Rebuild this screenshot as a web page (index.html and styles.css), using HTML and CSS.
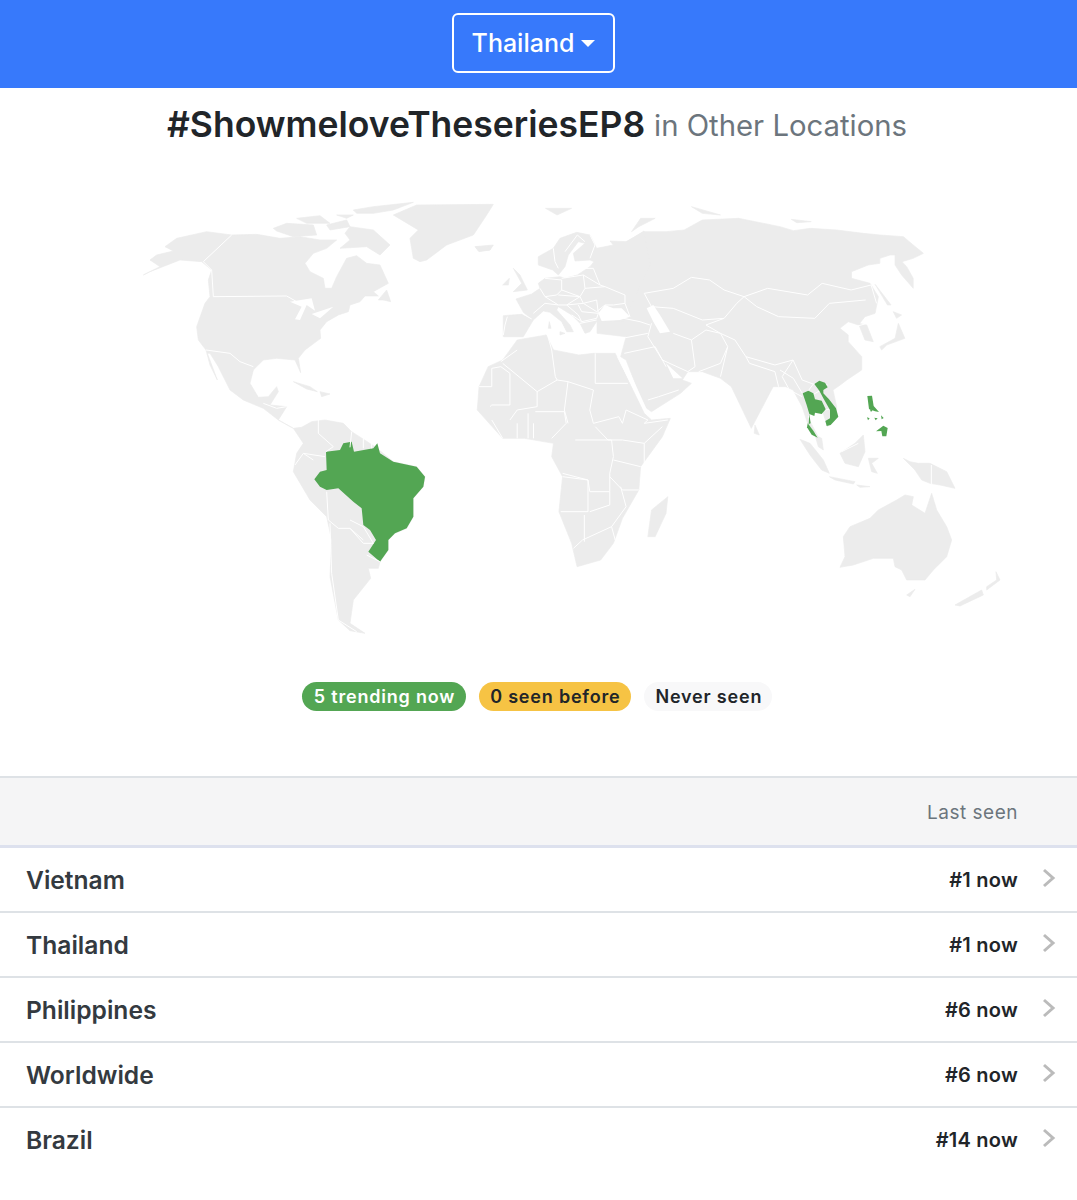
FILE: index.html
```html
<!DOCTYPE html>
<html lang="en">
<head>
<meta charset="utf-8">
<title>#ShowmeloveTheseriesEP8 in Other Locations</title>
<link rel="stylesheet" href="styles.css">
</head>
<body>
<header class="topbar">
  <button class="country-btn" type="button">Thailand<span class="caret"></span></button>
</header>
<main>
  <h1 class="title">#ShowmeloveTheseriesEP8 <small class="title-sub">in Other Locations</small></h1>
  <svg class="map" viewBox="0 160 1077 490" aria-label="World map">
    <g transform="translate(130 190) scale(.33333)">
      <g class="land">
        <path d="M40,255 L90,230 L60,210 L80,195 L130,183 L105,170 L140,145 L230,125 L305,135 L380,133 L450,145 L510,140 L570,150 L620,150 L590,175 L550,190 L525,220 L540,245 L580,265 L585,295 L605,295 L620,260 L650,205 L680,197 L710,220 L750,225 L775,280 L730,305 L745,318 L705,318 L690,335 L660,345 L655,365 L625,375 L590,395 L570,420 L572,445 L525,480 L505,505 L512,548 L495,510 L440,505 L400,510 L370,540 L360,580 L385,622 L415,620 L440,590 L445,605 L420,645 L470,650 L445,690 L490,715 L515,712 L545,695 L585,690 L640,700 L665,725 L735,770 L790,815 L860,830 L885,860 L880,890 L850,925 L850,980 L830,1015 L795,1030 L775,1050 L775,1080 L750,1115 L745,1135 L715,1135 L722,1165 L670,1230 L660,1300 L705,1330 L660,1322 L625,1290 L600,1160 L605,1050 L590,980 L540,930 L490,845 L500,790 L520,760 L490,715 L445,690 L400,655 L340,630 L300,600 L265,530 L240,490 L232,490 L262,570 L240,525 L228,480 L205,450 L200,410 L225,340 L240,320 L235,270 L245,240 L215,215 L150,210 L60,245 Z"/>
        <path d="M850,205 L840,145 L865,120 L790,75 L860,45 L1090,43 L1070,75 L1030,135 L950,165 L890,210 L870,215 Z"/>
        <path d="M630,175 L660,150 L645,130 L660,110 L730,120 L780,165 L750,195 L710,170 Z"/>
        <path d="M670,60 L730,50 L850,37 L790,60 L730,70 L680,70 Z"/>
        <path d="M430,115 L470,100 L550,105 L560,135 L490,140 L440,123 Z"/>
        <path d="M500,85 L570,77 L600,100 L530,100 Z"/>
        <path d="M590,105 L650,90 L660,110 L600,120 Z"/>
        <path d="M620,75 L670,75 L650,85 Z"/>
        <path d="M1035,170 L1090,165 L1080,180 L1045,183 Z"/>
        <path d="M745,330 L770,300 L782,335 L760,330 Z"/>
        <path d="M490,575 L540,590 L562,605 L530,597 Z"/>
        <path d="M570,605 L600,612 L575,620 Z"/>
      </g>
      <g class="water">
        <path d="M480,335 L545,325 L555,362 L530,345 L510,390 L495,388 L515,350 Z"/>
        <path d="M545,372 L610,350 L570,385 Z"/>
      </g>
      <path class="green" d="M553,868 L570,845 L590,840 L588,785 L630,780 L640,760 L665,755 L672,785 L730,775 L742,760 L750,790 L790,815 L860,830 L885,860 L880,890 L850,925 L850,980 L830,1015 L795,1030 L775,1050 L775,1080 L750,1115 L715,1085 L738,1050 L720,1020 L700,1005 L695,955 L670,935 L625,895 L590,900 L570,890 Z"/>
      <g class="borders">
        <path d="M305,135 L220,215 L245,240 L250,320 L470,318 L500,335 M228,480 L300,490 L330,515 L370,530 M400,640 L440,655 L470,650"/>
        <path d="M565,690 L565,730 L610,770 L588,785 M665,725 L660,772 M700,745 L700,775 M725,745 L725,775 M495,825 L520,790 L550,810 M520,790 L585,800 M590,905 L595,990 L625,1015 L660,1015 L700,1050 M660,990 L700,1010 L730,1060 L700,1060 L660,1015 M600,1000 L605,1150 L625,1290 L680,1325 M710,1095 L750,1115"/>
      </g>
    </g>
    <g transform="translate(470 190) scale(.363 .33333)">
      <g class="land">
        <path d="M350,395 L330,300 L430,155 L480,125 L540,125 L590,120 L640,90 L740,85 L854,110 L891,122 L937,115 L1010,120 L1083,130 L1129,135 L1194,140 L1221,165 L1249,190 L1221,205 L1190,215 L1203,230 L1221,265 L1221,295 L1189,255 L1171,225 L1171,195 L1157,195 L1129,205 L1129,220 L1097,225 L1051,245 L1051,265 L1102,280 L1125,320 L1116,370 L1088,380 L1070,405 L1042,395 L1019,415 L1042,435 L1042,455 L1079,500 L1079,540 L1038,570 L1020,585 L1000,600 L1010,650 L1010,680 L985,710 L970,660 L960,650 L930,680 L958,738 L930,700 L915,650 L890,600 L870,590 L835,590 L775,715 L720,590 L690,565 L640,545 L600,545 L585,570 L610,580 L580,610 L500,665 L480,650 L430,510 L415,500 L430,440 L350,430 Z"/>
        <path d="M25,590 L50,530 L90,510 L130,450 L210,435 L230,480 L300,495 L340,490 L400,490 L440,580 L480,670 L500,690 L552,685 L530,740 L470,830 L465,900 L420,985 L395,1060 L360,1110 L295,1130 L280,1060 L245,965 L255,860 L225,800 L230,760 L150,745 L90,745 L20,660 Z"/>
        <path d="M490,1040 L500,960 L545,920 L540,970 L510,1040 Z"/>
        <path d="M1070,400 L1093,405 L1111,455 L1088,450 L1079,425 Z"/>
        <path d="M1116,283 L1160,345 L1150,345 Z"/>
        <path d="M1166,365 L1189,375 L1175,385 Z"/>
        <path d="M1180,400 L1198,445 L1148,465 L1134,480 L1129,470 L1171,445 Z"/>
        <path d="M785,705 L797,735 L783,730 Z"/>
        <path d="M208,55 L280,55 L240,75 Z M610,50 L690,75 L640,70 Z M885,88 L940,95 L900,98 Z M445,125 L470,85 L510,85 L465,110 Z"/>
        <path d="M15,170 L60,168 L55,180 L25,185 Z"/>
      </g>
      <g class="water">
        <path d="M540,520 L585,565 L560,565 Z"/>
        <path d="M405,500 L425,510 L490,665 L475,650 Z"/>
      </g>
      <g class="borders">
        <path d="M85,515 L130,480 M25,590 L60,590 L60,535 L85,530 L110,550 L110,645 L60,645 L55,650 M90,520 L185,605 L240,570 M215,440 L225,480 L235,560 L240,570 L270,575 L340,600 L330,660 L340,700 M345,490 L345,580 L435,580 M185,605 L185,650 L130,660 L110,690 M270,575 L260,660 L270,700 M180,665 L260,665 L265,700 L225,745 M340,700 L410,680 L420,700 M345,710 L380,750 L420,750 M420,700 L430,660 L490,690 L480,700 L545,690 M420,750 L480,760 L530,710 M480,760 L480,830 M290,750 L390,750 L395,800 L385,850 L385,905 L330,905 L325,870 L255,850 M395,810 L470,830 M465,900 L420,900 L385,860 M255,860 L325,870 L325,965 L250,965 M385,905 L385,945 L330,965 M315,975 L315,1055 M285,1075 L310,1050 L390,1010 L400,1050 M415,890 L430,950 L390,1010 M130,700 L130,745 M160,670 L160,745 M175,700 L175,745 M60,690 L90,745"/>
        <path d="M480,310 L560,295 L610,262 L660,270 L700,300 L755,320 L820,295 L930,315 L970,280 L1050,300 L1105,285 L1120,340 M755,320 L790,350 L850,380 L950,385 L990,340 L1090,330 M755,320 L735,340 L700,385 L650,405 L690,430 L730,450 L760,500 L840,525 L890,510 L915,570 L945,582 L985,585 M480,310 L500,350 L560,355 L640,390 L700,385 M500,400 L490,440 L530,510 L600,545 L620,530 L610,450 L560,430 M610,450 L650,420 L690,430 L710,470 L690,520 L630,545 M690,560 L710,470 M425,490 L510,470 L540,530 M490,630 L520,620 L575,600 M420,445 L490,430 M890,510 L860,560 L880,600 L915,620 M760,500 L770,520 L840,545 L850,590 M1060,410 L1095,400"/>
      </g>
    </g>
    <g transform="translate(490 225) scale(.33333)">
      <g class="land">
        <path d="M40,272 L95,268 L125,282 L100,262 L78,222 L125,207 L150,190 L145,175 L165,160 L210,155 L225,160 L262,150 L300,125 L312,110 L300,105 L255,108 L250,85 L285,55 L265,50 L235,90 L225,125 L205,150 L188,135 L145,120 L145,95 L190,70 L210,40 L260,22 L300,30 L320,70 L370,60 L360,48 L410,50 L462,18 L480,120 L400,290 L321,288 L300,320 L285,325 L270,295 L245,270 L205,245 L200,255 L240,300 L250,320 L230,320 L215,290 L180,262 L160,258 L130,285 L100,335 L40,335 Z"/>
        <path d="M70,130 L90,150 L112,195 L70,200 L95,175 Z"/>
        <path d="M38,180 L58,160 L55,180 Z"/>
        <path d="M178,290 L183,310 L175,310 Z M210,320 L225,325 L210,330 Z"/>
      </g>
      <g class="water">
        <path d="M325,265 L345,240 L370,250 L395,250 L420,275 L390,285 L335,288 Z"/>
        <path d="M470,250 L490,240 L510,270 L540,320 L510,325 L490,290 Z"/>
      </g>
      <g class="borders">
        <path d="M190,70 L195,110 L205,130 M225,80 L262,30 L285,50 M300,30 L315,60 L300,100"/>
        <path d="M100,268 L125,282 M52,275 L45,300 L40,330 M150,190 L165,215 L205,240 L165,235 L130,265"/>
        <path d="M165,160 L215,165 L215,195 L200,210 L165,215 M215,160 L280,150 L285,190 L270,215 L215,195 M205,210 L270,215 L230,240 L205,240 M280,150 L330,180 L345,185 L285,190 M262,130 L310,130 L330,180 M345,185 L405,210 L405,235 L370,240 L345,240 L320,260 L280,235 L270,215 M280,235 L320,225 L325,265 L275,260 L265,240 M230,240 L280,235 M230,240 L265,270 L275,290 L320,280 L325,265 M270,295 L320,285 M245,270 L275,290 M400,280 L450,290 L480,300 M405,235 L420,275"/>
      </g>
    </g>
    <g transform="translate(790 430) scale(.33333)">
      <g class="land">
        <path d="M150,412 L165,380 L160,320 L180,290 L240,265 L265,240 L320,210 L345,195 L370,200 L365,225 L405,250 L425,190 L440,240 L470,290 L485,330 L470,380 L430,420 L405,450 L350,450 L335,420 L315,410 L310,385 L250,385 L190,405 Z"/>
        <path d="M350,495 L375,478 L360,500 Z"/>
        <path d="M495,525 L575,480 L580,495 L510,528 Z M590,480 L630,450 L618,425 L620,450 L590,470 Z"/>
        <path d="M30,28 L60,40 L100,90 L118,130 L95,120 L60,75 Z"/>
        <path d="M118,140 L195,155 L190,162 L135,150 Z"/>
        <path d="M150,70 L195,40 L220,15 L225,65 L205,110 L165,100 Z"/>
        <path d="M75,15 L95,25 L100,60 L85,50 Z"/>
        <path d="M235,85 L265,85 L245,100 L262,130 L245,125 L240,105 Z"/>
        <path d="M340,85 L360,95 L385,100 L420,100 L470,125 L495,175 L450,165 L420,160 L395,150 L375,120 Z"/>
        <path d="M200,165 L240,170 L210,172 Z"/>
      </g>
      <g class="borders">
        <path d="M155,65 L205,40 M424,105 L424,162"/>
      </g>
    </g>
    <g transform="translate(780 360) scale(.33333)">
      <g class="borders">
        <path d="M0,30 L40,55 L68,102 M100,72 L85,92 M120,92 L97,105 M135,150 L165,145"/>
      </g>
      <g class="green">
        <path d="M103,72 L118,62 L135,68 L143,82 L130,90 L130,100 L147,118 L168,145 L175,170 L152,195 L140,198 L136,183 L150,175 L150,150 L130,115 L118,92 Z"/>
        <path d="M68,100 L85,92 L100,100 L105,118 L125,122 L137,148 L125,162 L105,158 L103,168 L88,162 L80,135 Z"/>
        <path d="M88,162 L92,190 L86,192 Z"/>
        <path d="M83,190 L100,212 L113,233 L95,224 L81,202 Z"/>
        <path d="M262,108 L276,107 L281,138 L297,156 L285,154 L267,147 Z"/>
        <path d="M288,214 L310,197 L323,204 L319,229 L307,229 L304,213 Z"/>
        <path d="M269,147 L278,150 L273,156 Z M283,173 L293,175 L287,181 Z M303,166 L311,174 L305,178 Z M261,172 L269,175 L264,181 Z"/>
      </g>
    </g>
  </svg>
  <div class="legend">
    <span class="pill pill-green">5 trending now</span>
    <span class="pill pill-yellow">0 seen before</span>
    <span class="pill pill-light">Never seen</span>
  </div>
  <div class="table">
    <div class="thead">Last seen</div>
    <div class="row"><span class="name">Vietnam</span><span class="rank">#1 now</span><svg class="chev" viewBox="0 0 14 20"><path d="M2 2 L11 10 L2 18"/></svg></div>
    <div class="row"><span class="name">Thailand</span><span class="rank">#1 now</span><svg class="chev" viewBox="0 0 14 20"><path d="M2 2 L11 10 L2 18"/></svg></div>
    <div class="row"><span class="name">Philippines</span><span class="rank">#6 now</span><svg class="chev" viewBox="0 0 14 20"><path d="M2 2 L11 10 L2 18"/></svg></div>
    <div class="row"><span class="name">Worldwide</span><span class="rank">#6 now</span><svg class="chev" viewBox="0 0 14 20"><path d="M2 2 L11 10 L2 18"/></svg></div>
    <div class="row row-last"><span class="name">Brazil</span><span class="rank">#14 now</span><svg class="chev" viewBox="0 0 14 20"><path d="M2 2 L11 10 L2 18"/></svg></div>
  </div>
</main>
</body>
</html>
```
FILE: styles.css
```css
* { box-sizing: border-box; }
html, body { margin: 0; padding: 0; background: #fff; }
body { font-family: Inter, "Liberation Sans", sans-serif; color: #212529; height: 1200px; overflow: hidden; }
.topbar { height: 88px; background: #3779fb; display: flex; align-items: center; justify-content: center; padding: 0 10px 2px 0; }
.country-btn { width: 163px; height: 60px; background: transparent; border: 2px solid #fff; border-radius: 6px; color: #fff; font: 500 25px Inter, sans-serif; display: flex; align-items: center; justify-content: center; gap: 7px; padding: 0; }
.caret { width: 0; height: 0; border-left: 7px solid transparent; border-right: 7px solid transparent; border-top: 7px solid #fff; }
.title { margin: 0; height: 72px; padding: 14px 3px 0 0; text-align: center; font-size: 35.5px; line-height: 46px; font-weight: 600; color: #212529; white-space: nowrap; }
.title-sub { font-size: 29.3px; font-weight: 400; color: #6c757d; vertical-align: 1px; }
.map { display: block; width: 1077px; height: 490px; }
.land path { fill: #ececec; stroke: #ececec; stroke-width: 2; stroke-linejoin: round; }
.water path { fill: #fff; }
.borders path { fill: none; stroke: #fff; stroke-width: 1; vector-effect: non-scaling-stroke; stroke-linejoin: round; }
.green, .green path { fill: #53a653; }
.legend { display: flex; justify-content: center; gap: 13px; margin-top: 32px; padding-right: 3px; height: 30px; }
.pill { height: 29px; border-radius: 15px; padding: 0 11px; font-size: 18px; font-weight: 600; line-height: 29px; letter-spacing: .8px; }
.pill-green { background: #53a653; color: #fff; padding-left: 12px; }
.pill-yellow { background: #f6c344; color: #212529; }
.pill-light { background: #f8f8f9; color: #212529; padding-right: 10px; }
.table { margin-top: 64px; }
.thead { height: 72px; background: #f5f5f6; border-top: 2px solid #dee2e6; border-bottom: 3px solid #dde1ee; padding-right: 59px; text-align: right; font-size: 19px; line-height: 69px; color: #6c757d; letter-spacing: .5px; }
.row { height: 65px; border-bottom: 2px solid #dee2e6; display: flex; align-items: center; padding: 0 21px 0 26px; }
.row-last { border-bottom: 0; height: 63px; }
.name { flex: 1; font-size: 24.6px; font-weight: 600; color: #343a40; }
.rank { font-size: 20px; font-weight: 600; color: #212529; letter-spacing: .25px; }
.chev { width: 14px; height: 20px; margin-left: 24px; margin-top: -4px; }
.chev path { fill: none; stroke: #bbb; stroke-width: 3; }
```
